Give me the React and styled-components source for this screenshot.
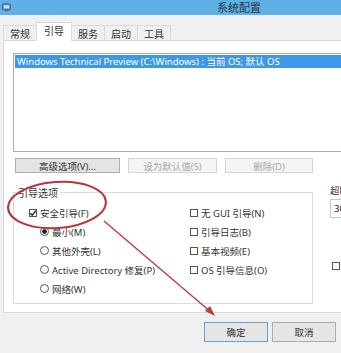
import React from 'react';
import styled, { createGlobalStyle } from 'styled-components';

const GlobalStyle = createGlobalStyle`
    html, body {
        margin: 0;
        padding: 0;
        background: #ffffff;
    }
    body {
        font-family: "Noto Sans", "Noto Sans CJK SC", sans-serif;
    }
`

const tabs = ['常规', '引导', '服务', '启动', '工具'];

const bootRadios = [
    { label: '最小(M)', checked: true },
    { label: '其他外壳(L)', checked: false },
    { label: 'Active Directory 修复(P)', checked: false },
    { label: '网络(W)', checked: false }
];

const bootChecks = ['无 GUI 引导(N)', '引导日志(B)', '基本视频(E)', 'OS 引导信息(O)'];

function App() {
    return (
        <>
            <GlobalStyle />
            <Window>
                <TitleBar>
                    <AppIcon viewBox="0 0 10 9">
                        <rect x="0.5" y="0.5" width="9" height="6.5" rx="1" fill="#6d8fc7" stroke="#3c5c96" strokeWidth="1" />
                        <rect x="2" y="2" width="6" height="3.5" fill="#c9ddf5" />
                        <rect x="3" y="7.5" width="4" height="1.2" fill="#4a6aa0" />
                    </AppIcon>
                    <Title>系统配置</Title>
                </TitleBar>
                <Body>
                    <TabStrip>
                        {tabs.map(function (tab) {
                            return <Tab key={tab} active={tab === '引导'}>{tab}</Tab>
                        })}
                    </TabStrip>
                    <Panel>
                        <OsList>
                            <OsItem>Windows Technical Preview (C:\Windows) : 当前 OS; 默认 OS</OsItem>
                        </OsList>
                        <ButtonRow>
                            <PushButton width={105}>高级选项(V)...</PushButton>
                            <PushButton width={89} disabled>设为默认值(S)</PushButton>
                            <PushButton width={88} disabled>删除(D)</PushButton>
                        </ButtonRow>
                        <OptionsRow>
                            <GroupBox>
                                <GroupLabel>引导选项</GroupLabel>
                                <GroupGrid>
                                    <Column>
                                        <Option>
                                            <CheckBox checked>
                                                <svg viewBox="0 0 8 8" width="8" height="8">
                                                    <path d="M1.2 4.2 L3.2 6.2 L6.9 1.6" fill="none" stroke="#222" strokeWidth="1.4" />
                                                </svg>
                                            </CheckBox>
                                            安全引导(F)
                                        </Option>
                                        {bootRadios.map(function (radio) {
                                            return <Option key={radio.label} indent>
                                                <Radio checked={radio.checked} />
                                                {radio.label}
                                            </Option>
                                        })}
                                    </Column>
                                    <Column>
                                        {bootChecks.map(function (check) {
                                            return <Option key={check}>
                                                <CheckBox />
                                                {check}
                                            </Option>
                                        })}
                                    </Column>
                                </GroupGrid>
                            </GroupBox>
                            <SideColumn>
                                <SideLabel>超时</SideLabel>
                                <TimeoutInput>30</TimeoutInput>
                                <SideCheck>
                                    <CheckBox />
                                </SideCheck>
                            </SideColumn>
                        </OptionsRow>
                    </Panel>
                    <Footer>
                        <DialogButton primary>确定</DialogButton>
                        <DialogButton>取消</DialogButton>
                    </Footer>
                </Body>
                {/* red annotation drawn over the dialog */}
                <Annotation viewBox="0 0 341 353">
                    <ellipse cx="57" cy="205" rx="49" ry="23" transform="rotate(-4 57 205)" fill="none" stroke="#b8363c" strokeWidth="2" />
                    <line x1="104" y1="221" x2="212" y2="313" stroke="#c23a3c" strokeWidth="1.4" />
                    <path d="M215 316 L205 311 L210 306 Z" fill="#c23a3c" />
                </Annotation>
            </Window>
        </>
    );
}

export default App;

const Window = styled.div`
    position: relative;
    width: 341px;
    height: 353px;
    overflow: hidden;
    background: #f0f0f0;
    display: flex;
    flex-direction: column;
    font-size: 9.5px;
    color: #222;
`

const TitleBar = styled.div`
    height: 15px;
    flex: none;
    background: #5eb0e5;
    display: flex;
    align-items: center;
    padding-left: 2px;
`

const AppIcon = styled.svg`
    width: 9px;
    height: 9px;
`

const Title = styled.div`
    margin-left: 206px;
    font-size: 11px;
    color: #2a3a4a;
    line-height: 15px;
`

const Body = styled.div`
    flex: 1;
    display: flex;
    flex-direction: column;
    padding: 7px 0 0 3px;
`

const TabStrip = styled.div`
    display: flex;
    align-items: flex-end;
    height: 19px;
    margin-bottom: -1px;
    position: relative;
    z-index: 1;
`

const Tab = styled.div`
    height: ${props => props.active ? '19px' : '16px'};
    width: ${props => props.active ? '36px' : '34px'};
    margin-right: -1px;
    box-sizing: border-box;
    border: 1px solid #d9d9d9;
    border-bottom: ${props => props.active ? '1px solid #ffffff' : '1px solid #d9d9d9'};
    background: ${props => props.active ? '#ffffff' : '#f0f0f0'};
    display: flex;
    align-items: center;
    justify-content: center;
    padding-bottom: ${props => props.active ? '2px' : '0'};
    font-size: 10px;
    color: #333;
`

const Panel = styled.div`
    height: 273px;
    margin-right: -30px;
    box-sizing: border-box;
    background: #ffffff;
    border: 1px solid #d9d9d9;
    padding: 12px 0 0 9px;
`

const OsList = styled.div`
    width: 360px;
    height: 99px;
    box-sizing: border-box;
    border: 1px solid #adadad;
    padding: 1px 0 0 1px;
`

const OsItem = styled.div`
    height: 13px;
    line-height: 13px;
    background: #3d98e8;
    color: #ffffff;
    padding-left: 2px;
    font-size: 9.5px;
    white-space: nowrap;
`

const ButtonRow = styled.div`
    display: flex;
    gap: 8px;
    margin-top: 6px;
    padding-left: 2px;
`

const PushButton = styled.div`
    width: ${props => props.width}px;
    height: 15px;
    box-sizing: border-box;
    border: 1px solid ${props => props.disabled ? '#d6d6d6' : '#adadad'};
    background: ${props => props.disabled ? '#f4f4f4' : '#e4e4e4'};
    color: ${props => props.disabled ? '#a8a8a8' : '#333'};
    display: flex;
    align-items: center;
    justify-content: center;
    font-size: 9.5px;
`

const OptionsRow = styled.div`
    display: flex;
    margin-top: 12px;
`

const GroupBox = styled.fieldset`
    flex: none;
    width: 300px;
    height: 119px;
    box-sizing: border-box;
    margin: 0;
    border: 1px solid #dcdcdc;
    padding: 3px 0 0 15px;
`

const GroupLabel = styled.legend`
    padding: 0 2px;
    margin-left: -13px;
    font-size: 10px;
    color: #333;
`

const GroupGrid = styled.div`
    display: grid;
    grid-template-columns: 161px 1fr;
`

const Column = styled.div`
    display: flex;
    flex-direction: column;
`

const Option = styled.div`
    height: 19px;
    display: flex;
    align-items: center;
    gap: 3px;
    padding-left: ${props => props.indent ? '11px' : '0'};
    font-size: 9.5px;
    color: #333;
    white-space: nowrap;
`

const CheckBox = styled.span`
    width: 8px;
    height: 8px;
    flex: none;
    box-sizing: border-box;
    border: 1px solid #555;
    background: #ffffff;
    display: flex;
    align-items: center;
    justify-content: center;
    svg {
        margin: -1px;
    }
`

const Radio = styled.span`
    width: 9px;
    height: 9px;
    flex: none;
    box-sizing: border-box;
    border: 1px solid #555;
    border-radius: 50%;
    background: ${props => props.checked ? 'radial-gradient(circle, #222 0 2px, #fff 2.5px)' : '#ffffff'};
`

const SideColumn = styled.div`
    flex: none;
    margin-left: 17px;
    display: flex;
    flex-direction: column;
    white-space: nowrap;
`

const SideLabel = styled.div`
    font-size: 9.5px;
    line-height: 12px;
    color: #333;
`

const TimeoutInput = styled.div`
    width: 60px;
    height: 19px;
    box-sizing: border-box;
    border: 1px solid #c4c4c4;
    margin-top: 2px;
    padding-left: 3px;
    line-height: 17px;
    font-size: 9.5px;
`

const SideCheck = styled.div`
    margin-top: 44px;
    display: flex;
    align-items: center;
    padding-left: 2px;
`

const Footer = styled.div`
    display: flex;
    justify-content: flex-end;
    gap: 4px;
    padding: 9px 5px 0 0;
`

const DialogButton = styled.div`
    width: 64px;
    height: 20px;
    box-sizing: border-box;
    border: 1px solid ${props => props.primary ? '#6a9fd3' : '#adadad'};
    background: #e6e6e6;
    display: flex;
    align-items: center;
    justify-content: center;
    font-size: 9.5px;
    color: #333;
`

const Annotation = styled.svg`
    position: absolute;
    top: 0;
    left: 0;
    width: 341px;
    height: 353px;
    pointer-events: none;
`
